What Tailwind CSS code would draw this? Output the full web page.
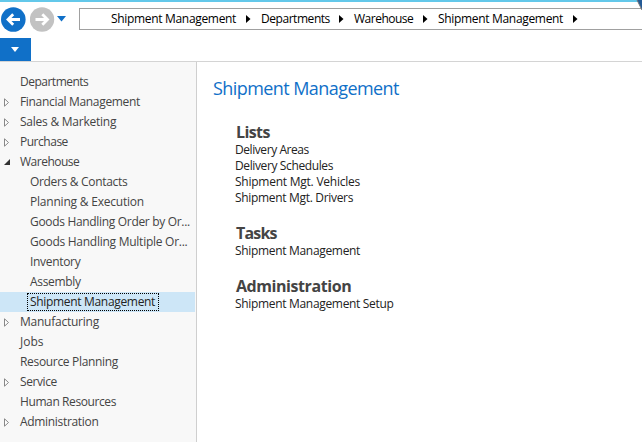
<!DOCTYPE html>
<html lang="en">
<head>
<meta charset="utf-8">
<title>Shipment Management</title>
<script src="https://cdn.jsdelivr.net/npm/@tailwindcss/browser@4"></script>
</head>
<body class="relative flex h-[442px] w-[642px] flex-col overflow-hidden bg-white font-['Open_Sans','Noto_Sans',sans-serif] text-[12px] tracking-[-0.32px] whitespace-nowrap">
<header class="flex h-[62px] flex-none flex-col border-t-2 border-b border-t-[#63c8ea] border-b-[#d4d4d4]">
  <div class="flex h-9 items-start">
    <div class="flex w-[79px] items-start gap-1 pt-[5px]">
      <svg class="ml-px h-[25px] w-[25px]" viewBox="0 0 25 25"><circle cx="12.3" cy="12.5" r="12.3" fill="#1070c8"/><path d="M19 12.5H8M12.2 7.3L7 12.5l5.200 5.200" fill="none" stroke="#fff" stroke-width="2.800"/></svg>
      <svg class="h-[25px] w-[25px]" viewBox="0 0 25 25"><circle cx="12" cy="12.5" r="12.2" fill="#c2c2c2"/><path d="M5.500 12.500h11M12.300 7.300l5.200 5.200-5.200 5.200" fill="none" stroke="#fff" stroke-width="2.800"/></svg>
      <svg class="-ml-[2px] mt-[9px] h-[6px] w-[9px]" viewBox="0 0 9 6"><path d="M0 0h9L4.500 5.500z" fill="#1070c8"/></svg>
    </div>
    <nav class="mt-[6px] flex h-[22px] flex-1 items-center border-y border-l border-[#a0a0a0] pl-[31px] text-black">
      <span class="w-[135px]">Shipment Management</span>
      <svg class="h-[8px] w-[5px]" viewBox="0 0 5 8"><path d="M0 0l4.500 4L0 8z"/></svg>
      <span class="ml-[10px] w-[78px] tracking-[-0.45px]">Departments</span>
      <svg class="h-[8px] w-[5px]" viewBox="0 0 5 8"><path d="M0 0l4.500 4L0 8z"/></svg>
      <span class="ml-[10px] w-[69px] tracking-[-0.5px]">Warehouse</span>
      <svg class="h-[8px] w-[5px]" viewBox="0 0 5 8"><path d="M0 0l4.500 4L0 8z"/></svg>
      <span class="ml-[10px] w-[135px]">Shipment Management</span>
      <svg class="h-[8px] w-[5px]" viewBox="0 0 5 8"><path d="M0 0l4.500 4L0 8z"/></svg>
    </nav>
  </div>
  <div class="flex h-[23px] w-[31px] items-center justify-center bg-[#1070c8] pr-[2px]">
    <svg class="h-[5px] w-[8px]" viewBox="0 0 8 5"><path d="M0 0h8L4 5z" fill="#fff"/></svg>
  </div>
</header>
<div class="flex flex-1">
  <aside class="w-[197px] flex-none border-r border-[#cfcfcf] bg-[#f8f8f8] pt-[10px] text-[#444] *:flex *:h-5 *:items-center">
    <div class="pl-5 tracking-[-0.5px]">Departments</div>
    <div><svg class="mr-[11px] ml-1 h-[9px] w-[5px]" viewBox="0 0 5 9"><path d="M.5.8v7.400L4.500 4.500z" fill="#fff" stroke="#888"/></svg>Financial Management</div>
    <div class="tracking-[-0.24px]"><svg class="mr-[11px] ml-1 h-[9px] w-[5px]" viewBox="0 0 5 9"><path d="M.5.8v7.400L4.500 4.500z" fill="#fff" stroke="#888"/></svg>Sales &amp; Marketing</div>
    <div class="tracking-[-0.48px]"><svg class="mr-[11px] ml-1 h-[9px] w-[5px]" viewBox="0 0 5 9"><path d="M.5.8v7.400L4.500 4.500z" fill="#fff" stroke="#888"/></svg>Purchase</div>
    <div class="tracking-[-0.5px]"><svg class="mr-[10px] ml-1 h-[6px] w-[6px]" viewBox="0 0 6 6"><path d="M6 0v6H0z" fill="#333"/></svg>Warehouse</div>
    <div class="pl-[30px]">Orders &amp; Contacts</div>
    <div class="pl-[30px] tracking-[-0.21px]">Planning &amp; Execution</div>
    <div class="pl-[30px]">Goods Handling Order by Or...</div>
    <div class="pl-[30px] tracking-[-0.26px]">Goods Handling Multiple Or...</div>
    <div class="pl-[30px]">Inventory</div>
    <div class="pl-[30px]">Assembly</div>
    <div class="mr-px bg-[#cde6f7] pl-[27px] text-[#222]"><span class="flex h-[18px] w-[132px] items-center border border-dotted border-black pl-[2px]">Shipment Management</span></div>
    <div class="tracking-[-0.24px]"><svg class="mr-[11px] ml-1 h-[9px] w-[5px]" viewBox="0 0 5 9"><path d="M.5.8v7.400L4.500 4.500z" fill="#fff" stroke="#888"/></svg>Manufacturing</div>
    <div class="pl-5 tracking-normal">Jobs</div>
    <div class="pl-5">Resource Planning</div>
    <div class="tracking-[-0.42px]"><svg class="mr-[11px] ml-1 h-[9px] w-[5px]" viewBox="0 0 5 9"><path d="M.5.8v7.400L4.500 4.500z" fill="#fff" stroke="#888"/></svg>Service</div>
    <div class="pl-5 tracking-[-0.4px]">Human Resources</div>
    <div><svg class="mr-[11px] ml-1 h-[9px] w-[5px]" viewBox="0 0 5 9"><path d="M.5.8v7.400L4.500 4.500z" fill="#fff" stroke="#888"/></svg>Administration</div>
  </aside>
  <main class="flex-1 pt-[14px] pl-[16px] text-[#222]">
    <h1 class="text-[18px] leading-6 tracking-[-0.57px] text-[#1070c8]">Shipment Management</h1>
    <div class="pl-[22px] leading-4">
      <h2 class="mt-[22px] h-5 pl-px text-[16px] leading-5 font-bold tracking-[-0.6px] text-[#444]">Lists</h2>
      <p class="tracking-[-0.43px]">Delivery Areas</p>
      <p class="tracking-[-0.38px]">Delivery Schedules</p>
      <p class="tracking-[-0.24px]">Shipment Mgt. Vehicles</p>
      <p>Shipment Mgt. Drivers</p>
      <h2 class="mt-[17px] h-5 pl-px text-[16px] leading-5 font-bold tracking-[-0.8px] text-[#444]">Tasks</h2>
      <p>Shipment Management</p>
      <h2 class="mt-[17px] h-5 pl-px text-[16px] leading-5 font-bold tracking-[-0.43px] text-[#444]">Administration</h2>
      <p>Shipment Management Setup</p>
    </div>
  </main>
</div>
<svg class="absolute top-0 right-0 h-[10px] w-[6px]" viewBox="0 0 6 10"><path d="M1 0h5v10z" fill="#245a96"/><path d="M1 0l5 10" stroke="#777"/></svg>
</body>
</html>
